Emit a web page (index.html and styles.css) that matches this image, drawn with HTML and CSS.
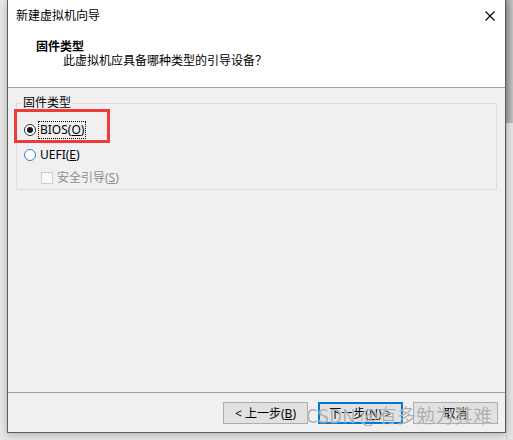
FILE: index.html
```html
<!DOCTYPE html>
<html lang="zh-CN">

<head>
    <meta charset="UTF-8" />
    <meta name="viewport" content="width=device-width, initial-scale=1.0" />
    <title>新建虚拟机向导</title>
    <link rel="stylesheet" href="styles.css">
</head>

<body>
    <div class="stage">
        <div class="gutter"></div>

        <div class="window">
            <div class="titlebar">
                <span class="caption">新建虚拟机向导</span>
                <svg class="close" width="10" height="10" viewBox="0 0 10 10">
                    <path d="M0.5 0.5 L9.5 9.5 M9.5 0.5 L0.5 9.5" stroke="#000" stroke-width="1.1" fill="none" />
                </svg>
            </div>

            <div class="header">
                <div class="h-title">固件类型</div>
                <div class="h-sub">此虚拟机应具备哪种类型的引导设备？</div>
            </div>

            <div class="content">
                <fieldset class="group">
                    <legend>固件类型</legend>
                    <div class="opt first">
                        <span class="radio checked"></span>
                        <span class="lbl focus">BIOS(<u>O</u>)</span>
                    </div>
                    <div class="opt second">
                        <span class="radio hover"></span>
                        <span class="lbl">UEFI(<u>E</u>)</span>
                    </div>
                    <div class="opt third">
                        <span class="check"></span>
                        <span class="lbl disabled">安全引导(<u>S</u>)</span>
                    </div>
                </fieldset>
            </div>

            <div class="footer">
                <button class="btn">&lt; 上一步(<u>B</u>)</button>
                <button class="btn primary">下一步(<u>N</u>) &gt;</button>
                <button class="btn">取消</button>
            </div>

            <!-- 标注框和水印 -->
            <div class="mark"></div>
            <div class="watermark">CSDN @有多勉为其难</div>
        </div>

        <div class="edge">
            <div class="edge-top"></div>
            <div class="edge-bottom"></div>
        </div>
    </div>
</body>

</html>
```

FILE: styles.css
```css
* {
    margin: 0;
    padding: 0;
    box-sizing: border-box;
}

body {
    background: #e8e8e8;
    font-family: "Noto Sans", "Noto Sans CJK SC", sans-serif;
    font-size: 12px;
    color: #000;
    overflow: hidden;
}

.stage {
    display: flex;
    width: 513px;
    height: 440px;
}

.gutter {
    width: 7px;
    flex: none;
}

.window {
    position: relative;
    width: 499px;
    height: 433px;
    flex: none;
    display: flex;
    flex-direction: column;
    border: 1px solid #5c5c5c;
    border-top: 0;
    background: #f0f0f0;
    box-shadow: 0 2px 8px rgba(0, 0, 0, .25);
}

.titlebar {
    height: 31px;
    display: flex;
    align-items: center;
    justify-content: space-between;
    padding: 0 10px 0 8px;
    background: #fff;
}

.caption {
    line-height: 14px;
}

.header {
    height: 57px;
    padding: 9px 0 0 28px;
    background: #fff;
    border-bottom: 1px solid #a0a0a0;
}

.h-title {
    font-weight: bold;
    line-height: 14px;
}

.h-sub {
    margin-left: 27px;
    line-height: 14px;
}

.content {
    height: 305px;
    padding: 8px 0 0 8px;
    border-bottom: 1px solid #a0a0a0;
}

.group {
    width: 481px;
    border: 1px solid #dcdcdc;
    padding: 11px 0 2px 0;
}

.group legend {
    margin-left: 4px;
    padding: 0 2px;
    line-height: 14px;
}

.opt {
    display: flex;
    align-items: center;
    height: 18px;
    padding-left: 7px;
}

.opt.second {
    margin-top: 7px;
}

.opt.third {
    margin-top: 5px;
    padding-left: 24px;
}

.radio {
    width: 12px;
    height: 12px;
    border-radius: 50%;
    border: 1px solid #333;
    background: #fff;
    display: flex;
    align-items: center;
    justify-content: center;
}

.radio.checked::after {
    content: "";
    width: 6px;
    height: 6px;
    border-radius: 50%;
    background: #1a1a1a;
}

.radio.hover {
    border-color: #2b86d8;
}

.check {
    width: 12px;
    height: 12px;
    border: 1px solid #cccccc;
    background: #fafafa;
}

.lbl {
    margin-left: 3px;
    padding: 0 1px;
    line-height: 16px;
}

.lbl.focus {
    outline: 1px dotted #000;
}

.lbl.disabled {
    color: #8d8d8d;
}

.footer {
    flex: 1;
    display: flex;
    justify-content: flex-end;
    align-items: flex-start;
    gap: 10px;
    padding: 9px 7px 0 0;
}

.btn {
    width: 85px;
    height: 22px;
    border: 1px solid #adadad;
    background: #e1e1e1;
    font-family: "Noto Sans", "Noto Sans CJK SC", sans-serif;
    font-size: 12px;
    color: #000;
}

.btn.primary {
    border: 2px solid #0078d7;
}

.mark {
    position: absolute;
    left: 6px;
    top: 109px;
    width: 96px;
    height: 34px;
    border: 3px solid #ef3b3b;
}

.watermark {
    position: absolute;
    left: 298px;
    top: 403px;
    font-family: "Noto Sans CJK SC", sans-serif;
    font-size: 19px;
    line-height: 24px;
    color: rgba(140, 140, 140, .7);
    text-shadow: 0 0 1px rgba(255, 255, 255, .9);
    white-space: nowrap;
}

.edge {
    width: 7px;
    flex: none;
    display: flex;
    flex-direction: column;
}

.edge-top {
    height: 123px;
    background: linear-gradient(90deg, #9c9c9c, #c4c4c4);
}

.edge-bottom {
    flex: 1;
    background: #e4e4e4;
    border-left: 1px solid #d0d0d0;
}
```
